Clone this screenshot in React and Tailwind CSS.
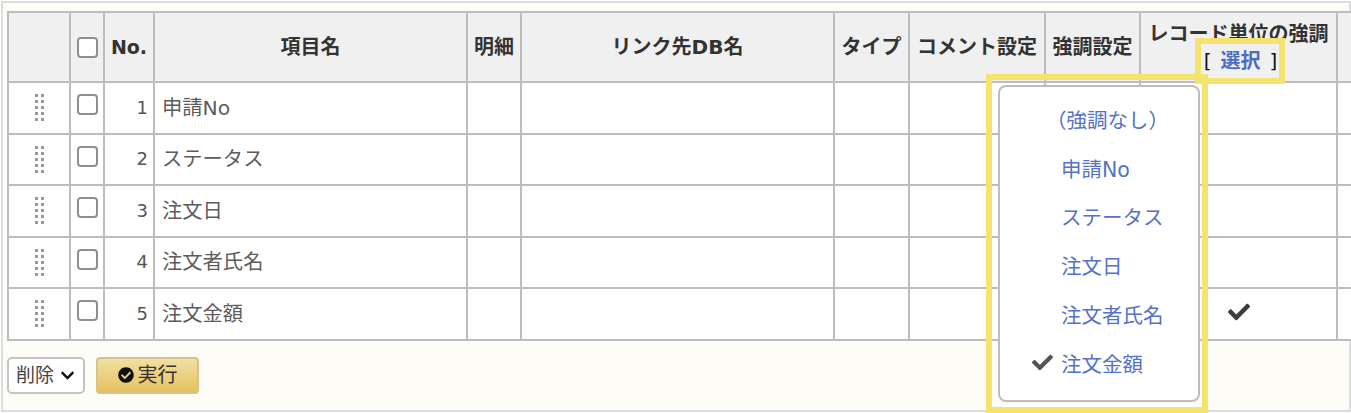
import { FaCheck, FaCheckCircle, FaChevronDown } from "react-icons/fa";

const font = { fontFamily: '"DejaVu Sans", "Noto Sans CJK JP", sans-serif' };

const items = ["申請No", "ステータス", "注文日", "注文者氏名", "注文金額"];
const menuItems = ["（強調なし）", "申請No", "ステータス", "注文日", "注文者氏名", "注文金額"];

const Box = () => (
  <span className="block w-[21px] h-[21px] rounded-[4px] border-2 border-[#8f8f8f] bg-white" />
);

const Grip = () => (
  <span className="grid grid-cols-2 gap-x-[3px] gap-y-[3px] w-[9px] mx-auto">
    {Array.from({ length: 10 }).map((_, i) => (
      <span key={i} className="w-[3px] h-[3px] bg-[#9a9a9a]" />
    ))}
  </span>
);

const Row = ({ no, name, checked }) => (
  <tr className="h-[51.5px]">
    <td className="border-2 border-[#bdbdbd] p-0 align-middle"><Grip /></td>
    <td className="border-2 border-[#bdbdbd] p-0 align-top"><div className="pl-[6px] pt-[11px]"><Box /></div></td>
    <td className="border-2 border-[#bdbdbd] pr-[5px] text-right text-[#555] text-[18px]">{no}</td>
    <td className="border-2 border-[#bdbdbd] pl-[7px] text-[20.3px] text-[#5c5c5c]">{name}</td>
    <td className="border-2 border-[#bdbdbd]" />
    <td className="border-2 border-[#bdbdbd]" />
    <td className="border-2 border-[#bdbdbd]" />
    <td className="border-2 border-[#bdbdbd]" />
    <td className="border-2 border-[#bdbdbd]" />
    <td className="border-2 border-[#bdbdbd] text-center p-0">
      {checked && <FaCheck className="inline-block text-[#3c3c3c] text-[22px] mb-[4px]" />}
    </td>
    <td className="border-2 border-[#bdbdbd]" />
  </tr>
);

const Menu = () => (
  <div className="absolute left-[986px] top-[74px] w-[222px] h-[339px] border-[6px] border-[#f5e370] pl-[6px] pr-[2px] pt-[5px] pb-[5px]">
    <div className="h-full rounded-[8px] border-2 border-[#bdbdbd] bg-white pt-[10px] flex flex-col">
      {menuItems.map((m, i) => (
        <div key={m} className="h-[48.7px] flex items-center relative pl-[61px] text-[20.5px] text-[#5472c8]">
          {i === 5 && <FaCheck className="absolute left-[32px] text-[#555] text-[21px] mb-[4px]" />}
          <span className={i === 0 ? "-ml-[15px]" : ""}>{m}</span>
        </div>
      ))}
    </div>
  </div>
);

export default function App() {
  return (
    <div style={font} className="relative w-[1351px] h-[413px] overflow-hidden bg-white text-[20px] leading-none">
      <div className="mt-[1px] ml-[1px] h-[411px] border-2 border-[#dcdcdc] bg-[#fdfcf7] pt-[8px] pl-[4px]">
        <table className="table-fixed border-collapse bg-white w-[1346px]">
          <colgroup>
            <col className="w-[62px]" />
            <col className="w-[34px]" />
            <col className="w-[50px]" />
            <col className="w-[313px]" />
            <col className="w-[54px]" />
            <col className="w-[313px]" />
            <col className="w-[75px]" />
            <col className="w-[136px]" />
            <col className="w-[95px]" />
            <col className="w-[197px]" />
            <col />
          </colgroup>
          <thead>
            <tr className="h-[70px] bg-[#f0f0f0] font-bold text-[#333]">
              <th className="border-2 border-[#bdbdbd]" />
              <th className="border-2 border-[#bdbdbd] p-0"><div className="pl-[6px]"><Box /></div></th>
              <th className="border-2 border-[#bdbdbd] p-0 text-[19px]">No.</th>
              <th className="border-2 border-[#bdbdbd] font-bold">項目名</th>
              <th className="border-2 border-[#bdbdbd] p-0 font-bold">明細</th>
              <th className="border-2 border-[#bdbdbd] font-bold">リンク先DB名</th>
              <th className="border-2 border-[#bdbdbd] p-0 font-bold">タイプ</th>
              <th className="border-2 border-[#bdbdbd] p-0 font-bold">コメント設定</th>
              <th className="border-2 border-[#bdbdbd] p-0 font-bold">強調設定</th>
              <th className="border-2 border-[#bdbdbd] p-0 font-bold">
                <div className="whitespace-nowrap">レコード単位の強調</div>
                <div className="mt-[7px] pl-[4px] flex justify-center items-center">
                  <span className="font-normal text-[#111]">[</span>
                  <span className="text-[#4a6cc4] mx-[9px]">選択</span>
                  <span className="font-normal text-[#111]">]</span>
                </div>
              </th>
              <th className="border-2 border-[#bdbdbd]" />
            </tr>
          </thead>
          <tbody>
            {items.map((name, i) => (
              <Row key={name} no={i + 1} name={name} checked={i === 4} />
            ))}
          </tbody>
        </table>
        <div className="flex gap-[11px] mt-[16px]">
          <div className="w-[78px] h-[37px] flex items-center gap-[6px] pl-[7px] rounded-[5px] border-2 border-[#c4c4c4] bg-white text-[#444]">
            <span className="text-[19px] whitespace-nowrap">削除</span>
            <FaChevronDown className="text-[#111] text-[15px]" />
          </div>
          <div className="w-[103px] h-[37px] flex items-center justify-center gap-[4px] rounded-[4px] border-2 border-[#d5c48e] bg-gradient-to-b from-[#f2dfa2] to-[#e6c25c] text-[#333]">
            <FaCheckCircle className="text-[#111] text-[16px]" />
            <span>実行</span>
          </div>
        </div>
      </div>
      <div className="absolute left-[1195px] top-[38px] w-[90px] h-[46px] border-[6px] border-[#f5e370]" />
      <Menu />
    </div>
  );
}
